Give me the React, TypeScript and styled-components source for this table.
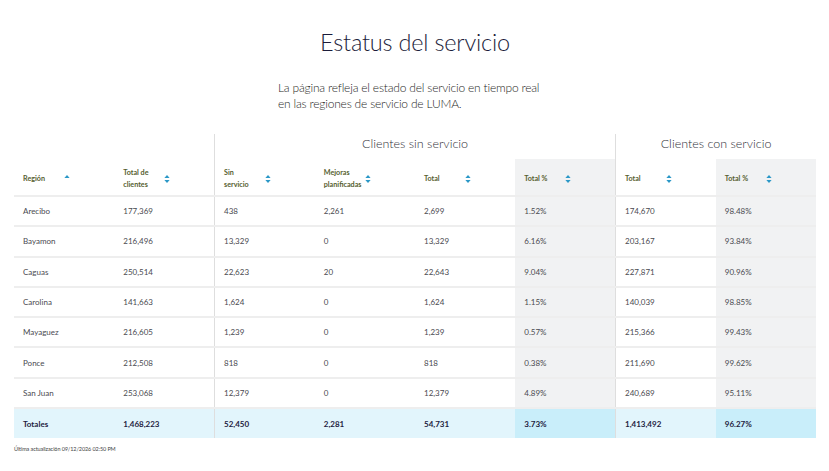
import React from "react";
import styled, { createGlobalStyle } from "styled-components";

const Global = createGlobalStyle`
  html, body { margin: 0; padding: 0; background: #ffffff; }
  body { font-family: "Lato", "Open Sans", sans-serif; color: #333; }
  *, *::before, *::after { box-sizing: border-box; }
`;

const Page = styled.main`
  width: 829px;
  padding: 0 13px 0 14px;
`;

const Title = styled.h1`
  margin: 0;
  padding-top: 27px;
  height: 56px;
  text-align: center;
  font-family: "Lato", sans-serif;
  font-weight: 300;
  font-size: 23.5px;
  line-height: 30px;
  color: #1b1c3a;
  letter-spacing: -0.2px;
`;

const Intro = styled.p`
  margin: 24px 0 0 264px;
  font-size: 12px;
  line-height: 16px;
  font-weight: 300;
  letter-spacing: -0.2px;
  color: #1f1f26;
  width: 300px;
`;

const Table = styled.table`
  margin-top: 22px;
  width: 802px;
  border-collapse: collapse;
  table-layout: fixed;
  font-family: "Lato", sans-serif;
`;

const GroupCell = styled.th<{ $divider?: boolean }>`
  height: 25px;
  padding: 2px 0 0;
  font-size: 12.5px;
  line-height: 15px;
  font-weight: 300;
  color: #2f2f38;
  text-align: center;
  vertical-align: top;
  border-left: ${(p) => (p.$divider ? "1px solid #dedede" : "none")};
`;

const HeadCell = styled.th<{ $shade?: boolean; $divider?: boolean }>`
  height: 37px;
  padding: 0 0 0 9px;
  text-align: left;
  vertical-align: middle;
  background: ${(p) => (p.$shade ? "#f1f2f3" : "transparent")};
  border-left: ${(p) => (p.$divider ? "1px solid #dedede" : "none")};
  border-bottom: 2px solid #eeeeee;
`;

const HeadInner = styled.div`
  display: flex;
  align-items: center;
  padding-top: 3px;
`;

const HeadLabel = styled.span`
  width: 41px;
  flex-shrink: 0;
  font-size: 7.2px;
  line-height: 12px;
  font-weight: 700;
  color: #56602f;
  white-space: normal;
`;

const Row = styled.tr<{ $total?: boolean }>`
  background: ${(p) => (p.$total ? "#e2f5fc" : "transparent")};
`;

const Cell = styled.td<{ $shade?: boolean; $divider?: boolean; $total?: boolean }>`
  height: 30.3px;
  padding: 0 0 0 9px;
  font-size: 8px;
  font-weight: ${(p) => (p.$total ? 700 : 400)};
  color: ${(p) => (p.$total ? "#1d2240" : "#4a4a50")};
  background: ${(p) =>
    p.$total ? (p.$shade ? "#c9eefa" : "#e2f5fc") : p.$shade ? "#f1f2f3" : "transparent"};
  border-left: ${(p) => (p.$divider ? "1px solid #dedede" : "none")};
  border-bottom: ${(p) => (p.$total ? "none" : "2px solid #eeeeee")};
  white-space: nowrap;
`;

const Footer = styled.p`
  margin: 8px 0 0;
  font-size: 5.5px;
  color: #444;
  letter-spacing: -0.1px;
`;

const SortIcon = ({ upOnly }: { upOnly?: boolean }) => (
  <svg width="6" height="10" viewBox="0 0 6 10" aria-hidden="true">
    <path d="M3 1 L5.6 4 L0.4 4 Z" fill="#2b98c7" />
    {!upOnly && <path d="M3 9 L5.6 6 L0.4 6 Z" fill="#2b98c7" />}
  </svg>
);

type Col = { label: React.ReactNode; shade?: boolean; divider?: boolean; upOnly?: boolean };

const columns: Col[] = [
  { label: "Región", upOnly: true },
  { label: <>Total de<br />clientes</> },
  { label: <>Sin<br />servicio</>, divider: true },
  { label: <>Mejoras<br />planificadas</> },
  { label: "Total" },
  { label: "Total %", shade: true },
  { label: "Total", divider: true },
  { label: "Total %", shade: true },
];

const rows: string[][] = [
  ["Arecibo", "177,369", "438", "2,261", "2,699", "1.52%", "174,670", "98.48%"],
  ["Bayamon", "216,496", "13,329", "0", "13,329", "6.16%", "203,167", "93.84%"],
  ["Caguas", "250,514", "22,623", "20", "22,643", "9.04%", "227,871", "90.96%"],
  ["Carolina", "141,663", "1,624", "0", "1,624", "1.15%", "140,039", "98.85%"],
  ["Mayaguez", "216,605", "1,239", "0", "1,239", "0.57%", "215,366", "99.43%"],
  ["Ponce", "212,508", "818", "0", "818", "0.38%", "211,690", "99.62%"],
  ["San Juan", "253,068", "12,379", "0", "12,379", "4.89%", "240,689", "95.11%"],
];

const totals = ["Totales", "1,468,223", "52,450", "2,281", "54,731", "3.73%", "1,413,492", "96.27%"];

export default function App() {
  return (
    <>
      <Global />
      <Page>
        <Title>Estatus del servicio</Title>
        <Intro>
          La página refleja el estado del servicio en tiempo real
          <br />
          en las regiones de servicio de LUMA.
        </Intro>
        <Table>
          <colgroup>
            {columns.map((_, i) => (
              <col key={i} style={{ width: `${802 / 8}px` }} />
            ))}
          </colgroup>
          <thead>
            <tr>
              <GroupCell colSpan={2} />
              <GroupCell colSpan={4} $divider>
                Clientes sin servicio
              </GroupCell>
              <GroupCell colSpan={2} $divider>
                Clientes con servicio
              </GroupCell>
            </tr>
            <tr>
              {columns.map((c, i) => (
                <HeadCell key={i} $shade={c.shade} $divider={c.divider}>
                  <HeadInner>
                    <HeadLabel>{c.label}</HeadLabel>
                    <SortIcon upOnly={c.upOnly} />
                  </HeadInner>
                </HeadCell>
              ))}
            </tr>
          </thead>
          <tbody>
            {rows.map((r) => (
              <Row key={r[0]}>
                {r.map((v, i) => (
                  <Cell key={i} $shade={columns[i].shade} $divider={columns[i].divider}>
                    {v}
                  </Cell>
                ))}
              </Row>
            ))}
            <Row $total>
              {totals.map((v, i) => (
                <Cell key={i} $total $shade={columns[i].shade} $divider={columns[i].divider}>
                  {v}
                </Cell>
              ))}
            </Row>
          </tbody>
        </Table>
        <Footer>Última actualización 09/12/2026 02:50 PM</Footer>
      </Page>
    </>
  );
}
